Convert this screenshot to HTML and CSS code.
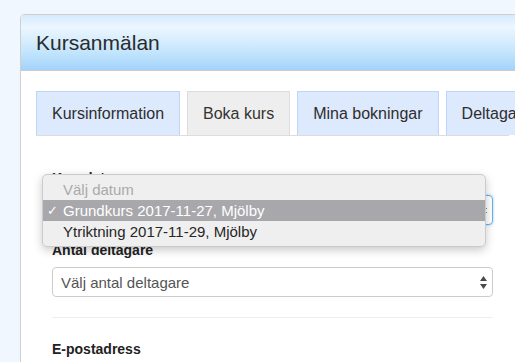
FILE: index.html
```html
<!DOCTYPE html>
<html lang="sv">
<head>
<meta charset="utf-8">
<title>Kursanmälan</title>
<link rel="stylesheet" href="styles.css">
</head>
<body>
<div class="panel">
  <div class="panel-header">Kursanmälan</div>
  <div class="panel-body">
    <ul class="tabs">
      <li class="tab tab-blue">Kursinformation</li>
      <li class="tab tab-active">Boka kurs</li>
      <li class="tab tab-blue">Mina bokningar</li>
      <li class="tab tab-blue">Deltagare</li>
    </ul>
    <div class="tab-content">
      <div class="form-group">
        <label class="field-label">Kursdatum</label>
        <div class="select select-focus">
          <span class="select-text">Grundkurs 2017-11-27, Mjölby</span>
          <svg class="arrows" width="7" height="13" viewBox="0 0 7 13"><path d="M3.5 0 L7 5 L0 5 Z M0 8 L7 8 L3.5 13 Z" fill="#4a4a4a"/></svg>
          <ul class="menu">
            <li class="menu-item menu-placeholder">Välj datum</li>
            <li class="menu-item menu-selected"><span class="check">✓</span>Grundkurs 2017-11-27, Mjölby</li>
            <li class="menu-item">Ytriktning 2017-11-29, Mjölby</li>
          </ul>
        </div>
      </div>
      <div class="form-group last">
        <label class="field-label">Antal deltagare</label>
        <div class="select">
          <span class="select-text">Välj antal deltagare</span>
          <svg class="arrows" width="7" height="13" viewBox="0 0 7 13"><path d="M3.5 0 L7 5 L0 5 Z M0 8 L7 8 L3.5 13 Z" fill="#4a4a4a"/></svg>
        </div>
      </div>
      <hr class="divider">
      <div class="form-group">
        <label class="field-label">E-postadress</label>
      </div>
    </div>
  </div>
</div>
</body>
</html>
```

FILE: styles.css
```css
html, body {
  margin: 0;
  padding: 0;
}
body {
  background: #f1f7fe;
  padding: 14px 0 0 20px;
  overflow: hidden;
  height: 362px;
  box-sizing: border-box;
  font-family: "Liberation Sans", Arial, Helvetica, sans-serif;
  color: #333;
}
.panel {
  width: 505px;
  height: 348px;
  overflow: hidden;
  box-sizing: border-box;
  background: #fff;
  border: 1px solid #cfcfcf;
  border-bottom: none;
  border-radius: 5px 5px 0 0;
}
.panel-header {
  height: 55px;
  line-height: 55px;
  padding: 0 15px;
  font-size: 21px;
  color: #2b2b2b;
  border-bottom: 1px solid #cccccc;
  border-radius: 4px 4px 0 0;
  background: linear-gradient(to bottom, #d6eafd 0%, #ecf6ff 22%, #d4ecfd 50%, #bce1fc 75%, #a2d3fb 100%);
}
.panel-body {
  padding: 20px 15px 0;
}
.tabs {
  display: flex;
  gap: 7px;
  margin: 0;
  padding: 0;
  list-style: none;
  border-bottom: 1px solid #dddddd;
}
.tab {
  flex-shrink: 0;
  height: 43px;
  line-height: 43px;
  padding: 0 15px;
  font-size: 16px;
  white-space: nowrap;
  border: 1px solid transparent;
  border-bottom: none;
  color: #2e2e2e;
}
.tab-blue {
  background: #dde9fd;
  border-color: #bcd6f8;
}
.tab-active {
  background: #eeeeee;
  border-color: #dddddd;
  color: #333;
}
.tab-content {
  padding: 32px 16px 0;
}
.form-group {
  margin-bottom: 15px;
}
.form-group.last {
  margin-bottom: 0;
}
.field-label {
  display: block;
  font-size: 14px;
  font-weight: bold;
  line-height: 20px;
  margin-bottom: 7px;
  color: #222;
}
.select {
  position: relative;
  height: 30px;
  box-sizing: border-box;
  border: 1px solid #cccccc;
  border-radius: 4px;
  display: flex;
  align-items: center;
  padding: 0 5px 0 8px;
  font-size: 15px;
  color: #555;
}
.select-focus {
  border-color: #66afe9;
  box-shadow: 0 0 3px rgba(102, 175, 233, 0.6);
}
.select-text {
  flex: 1;
  white-space: nowrap;
  overflow: hidden;
}
.arrows {
  display: block;
  margin-top: 1px;
}
.menu {
  position: absolute;
  left: -11px;
  top: -22px;
  width: 444px;
  box-sizing: border-box;
  margin: 0;
  padding: 4px 0;
  list-style: none;
  background: #efefef;
  border: 1px solid #cbcbcb;
  border-radius: 5px;
  box-shadow: 0 3px 10px rgba(0, 0, 0, 0.22);
  z-index: 5;
}
.menu-item {
  position: relative;
  height: 21px;
  line-height: 21px;
  padding-left: 20px;
  font-size: 15px;
  color: #262626;
  white-space: nowrap;
}
.menu-placeholder {
  color: #aaaaaa;
}
.menu-selected {
  background: #a8a7ab;
  color: #ffffff;
}
.check {
  position: absolute;
  left: 4px;
  top: 0;
  font-size: 13px;
}
.divider {
  border: 0;
  border-top: 1px solid #eeeeee;
  margin: 20px 0 21px;
}
```
